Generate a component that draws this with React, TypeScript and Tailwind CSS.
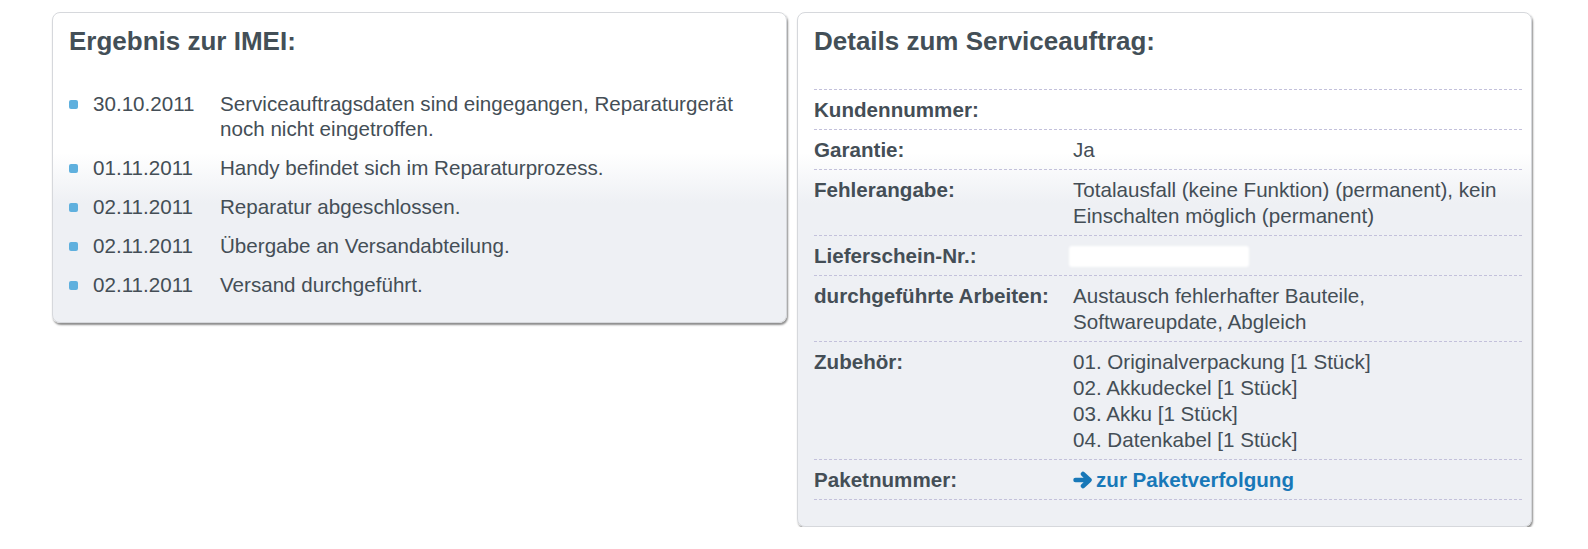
import React from "react"

const history = [
  { date: "30.10.2011", text: "Serviceauftragsdaten sind eingegangen, Reparaturgerät noch nicht eingetroffen." },
  { date: "01.11.2011", text: "Handy befindet sich im Reparaturprozess." },
  { date: "02.11.2011", text: "Reparatur abgeschlossen." },
  { date: "02.11.2011", text: "Übergabe an Versandabteilung." },
  { date: "02.11.2011", text: "Versand durchgeführt." },
]

const panel =
  "w-[735px] rounded-[8px] border border-[#d6d8dc] bg-[linear-gradient(to_bottom,#ffffff_140px,#eef0f4_190px)] shadow-[1px_2px_2px_rgba(0,0,0,0.45)] pl-4 pt-[13px]"

function ArrowIcon() {
  return (
    <svg width="20" height="18" viewBox="0 0 20 18" className="mr-[3px] shrink-0">
      <path
        d="M2.5 9 H16 M10 3 L16.5 9 L10 15"
        fill="none"
        stroke="#1878b8"
        strokeWidth="4.5"
        strokeLinecap="round"
        strokeLinejoin="round"
      />
    </svg>
  )
}

function Row({ label, children }: { label: string; children?: React.ReactNode }) {
  return (
    <div className="flex border-b border-dashed border-[#c3c1db] pt-[7px] pb-[6px] leading-[26px]">
      <div className="w-[259px] shrink-0 font-bold">{label}</div>
      <div className="flex-1">{children}</div>
    </div>
  )
}

export default function App() {
  return (
    <div
      className="flex items-start gap-[10px] pl-[52px] pt-[12px] text-[20.6px] text-[#444e56]"
      style={{ fontFamily: '"Liberation Sans", Arial, sans-serif' }}
    >
      {/* Ergebnis */}
      <div className={`${panel} pr-4 pb-[25px]`}>
        <h2 className="text-[26px] leading-[30px] font-bold text-[#434f57]">Ergebnis zur IMEI:</h2>
        <ul className="mt-[35px] space-y-[14px] leading-[25px]">
          {history.map((h, i) => (
            <li key={i} className="flex">
              <span className="w-[24px] shrink-0 pt-[9px]">
                <span className="block h-[9px] w-[9px] rounded-[2px] bg-[#5fb0de]" />
              </span>
              <span className="w-[127px] shrink-0">{h.date}</span>
              <span className="w-[545px]">{h.text}</span>
            </li>
          ))}
        </ul>
      </div>

      {/* Details */}
      <div className={`${panel} pr-[9px] pb-[26px]`}>
        <h2 className="text-[26px] leading-[30px] font-bold text-[#434f57]">Details zum Serviceauftrag:</h2>
        <div className="mt-[33px] border-t border-dashed border-[#c3c1db]">
          <Row label="Kundennummer:" />
          <Row label="Garantie:">Ja</Row>
          <Row label="Fehlerangabe:">
            <div className="w-[445px]">Totalausfall (keine Funktion) (permanent), kein Einschalten möglich (permanent)</div>
          </Row>
          <Row label="Lieferschein-Nr.:">
            <div className="mt-[3px] ml-[-4px] h-[21px] w-[180px] rounded-[3px] bg-white blur-[1px]" />
          </Row>
          <Row label="durchgeführte Arbeiten:">
            <div className="w-[325px]">Austausch fehlerhafter Bauteile, Softwareupdate, Abgleich</div>
          </Row>
          <Row label="Zubehör:">
            <div>01. Originalverpackung [1 Stück]</div>
            <div>02. Akkudeckel [1 Stück]</div>
            <div>03. Akku [1 Stück]</div>
            <div>04. Datenkabel [1 Stück]</div>
          </Row>
          <Row label="Paketnummer:">
            <a href="#" className="flex items-center font-bold text-[#1878b8]">
              <ArrowIcon />
              zur Paketverfolgung
            </a>
          </Row>
        </div>
      </div>
    </div>
  )
}
